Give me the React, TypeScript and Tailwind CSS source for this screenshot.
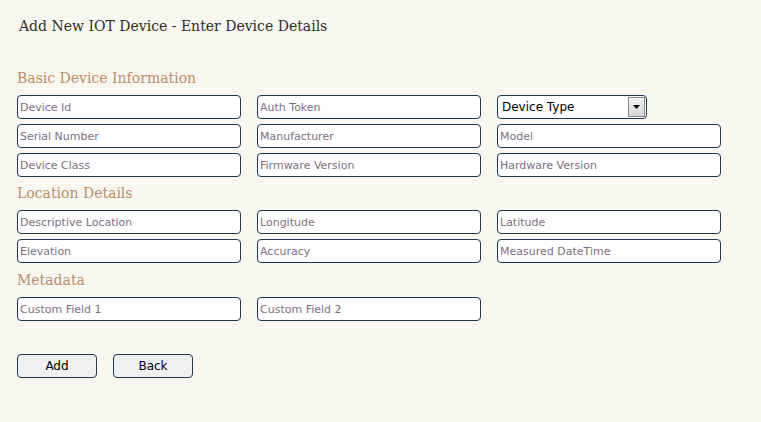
import React from 'react';

const sans = "font-['DejaVu_Sans',sans-serif]";
const serif = "font-['DejaVu_Serif',serif]";

const Field = ({ placeholder }: { placeholder: string }) => (
  <input
    type="text"
    placeholder={placeholder}
    className={`w-[224px] h-[24px] bg-white border border-[#1f3550] rounded-[4px] px-[2px] text-[11px] text-black placeholder:text-[#7a6f80] outline-none ${sans}`}
  />
);

const Heading = ({ children }: { children: React.ReactNode }) => (
  <h2 className={`text-[14px] leading-[22px] text-[#bb8d6c] mb-[6px] ${serif}`}>{children}</h2>
);

const Section = ({ title, fields, top }: { title: string; fields: string[]; top: string }) => (
  <div className={top}>
    <Heading>{title}</Heading>
    <div className="grid grid-cols-[224px_224px_224px] gap-x-4 gap-y-[5px]">
      {fields.map((f) => (
        <Field key={f} placeholder={f} />
      ))}
    </div>
  </div>
);

const App = () => {
  return (
    <div className="min-h-[422px] w-full bg-[#f9f8f0] pl-[17px] pt-[16px]">
      <h1 className={`pl-[2px] text-[14px] leading-[20px] text-[#2e2e2e] ${serif}`}>
        Add New IOT Device - Enter Device Details
      </h1>

      <div className="mt-[31px]">
        <Heading>Basic Device Information</Heading>
        <div className="grid grid-cols-[224px_224px_224px] gap-x-4 gap-y-[5px]">
          <Field placeholder="Device Id" />
          <Field placeholder="Auth Token" />
          <div className="relative w-[150px] h-[24px] bg-white border border-[#1f3550] rounded-[4px] flex items-center">
            <span className={`pl-[4px] text-[12px] text-black ${sans}`}>Device Type</span>
            <div className="absolute right-[1px] top-[1px] bottom-[1px] w-[17px] border border-[#8a8a8a] bg-gradient-to-b from-[#f4f4f4] to-[#d6d6d6] flex items-center justify-center">
              <svg width="7" height="4" viewBox="0 0 7 4"><path d="M0 0h7L3.5 4z" fill="#000" /></svg>
            </div>
          </div>
          <Field placeholder="Serial Number" />
          <Field placeholder="Manufacturer" />
          <Field placeholder="Model" />
          <Field placeholder="Device Class" />
          <Field placeholder="Firmware Version" />
          <Field placeholder="Hardware Version" />
        </div>
      </div>

      <Section
        top="mt-[5px]"
        title="Location Details"
        fields={['Descriptive Location', 'Longitude', 'Latitude', 'Elevation', 'Accuracy', 'Measured DateTime']}
      />

      <Section top="mt-[6px]" title="Metadata" fields={['Custom Field 1', 'Custom Field 2']} />

      <div className="flex gap-4 mt-[33px]">
        <button className={`w-[80px] h-[24px] bg-[#f0f0f0] border border-[#1f3550] rounded-[4px] text-[12px] text-black ${sans}`}>
          Add
        </button>
        <button className={`w-[80px] h-[24px] bg-[#f0f0f0] border border-[#1f3550] rounded-[4px] text-[12px] text-black ${sans}`}>
          Back
        </button>
      </div>
    </div>
  );
};

export default App;
